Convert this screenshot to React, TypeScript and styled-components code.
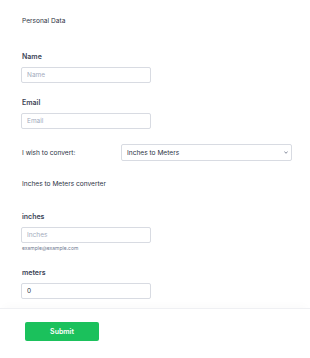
import React from "react";
import styled, { createGlobalStyle } from "styled-components";

const GlobalStyle = createGlobalStyle`
  html, body {
    margin: 0;
    padding: 0;
    background: #ffffff;
  }
  body {
    font-family: Inter, "Noto Sans", sans-serif;
    color: #2c3345;
  }
`;

const Page = styled.div`
  width: 310px;
  height: 358px;
  overflow: hidden;
  display: flex;
  flex-direction: column;
`;

const Body = styled.div`
  padding: 16px 0 0 21px;
  display: flex;
  flex-direction: column;
`;

const Heading = styled.div`
  font-size: 6.6px;
  line-height: 10px;
  padding-left: 1px;
  margin-bottom: 26px;
`;

const Field = styled.div<{ $gap?: number }>`
  display: flex;
  flex-direction: column;
  margin-bottom: ${(p) => p.$gap ?? 15}px;
`;

const Label = styled.label`
  font-size: 7px;
  font-weight: 600;
  line-height: 10px;
  color: #3b4356;
  padding-left: 1px;
  margin-bottom: 5px;
`;

const Input = styled.input`
  display: block;
  box-sizing: border-box;
  width: 130px;
  height: 16px;
  margin: 0;
  border: 1px solid #d8dbe2;
  border-radius: 2px;
  padding: 0 5px;
  font-family: inherit;
  font-size: 6.5px;
  color: #2c3345;
  outline: none;
  &::placeholder {
    color: #a3abbd;
  }
`;

const Sublabel = styled.div`
  font-size: 5px;
  line-height: 6px;
  color: #6f7a90;
  margin-top: 2px;
  padding-left: 1px;
`;

const ConvertRow = styled.div`
  display: flex;
  align-items: center;
  margin-bottom: 18px;
`;

const RowLabel = styled.label`
  width: 99px;
  font-size: 6.6px;
  line-height: 10px;
  padding-left: 1px;
`;

const SelectWrap = styled.div`
  position: relative;
  width: 171px;
  height: 17px;
  line-height: 0;
`;

const Select = styled.select`
  display: block;
  box-sizing: border-box;
  width: 100%;
  height: 100%;
  margin: 0;
  appearance: none;
  border: 1px solid #d8dbe2;
  border-radius: 2px;
  background: #ffffff;
  padding: 0 5px;
  font-family: inherit;
  font-size: 6.6px;
  color: #2c3345;
  outline: none;
`;

const Chevron = styled.svg`
  position: absolute;
  right: 4px;
  top: 7px;
  width: 4px;
  height: 3px;
  pointer-events: none;
`;

const Note = styled.div`
  font-size: 6.6px;
  line-height: 10px;
  padding-left: 1px;
  margin-bottom: 23px;
`;

const Footer = styled.div`
  margin-top: 9px;
  border-top: 1px solid #eff0f3;
  box-shadow: 0 -6px 8px -4px rgba(0, 0, 0, 0.025);
  padding: 13px 0 0 25px;
`;

const SubmitButton = styled.button`
  display: block;
  width: 74px;
  height: 19px;
  border: none;
  border-radius: 2px;
  background: #1bc15c;
  color: #ffffff;
  font-family: inherit;
  font-size: 7px;
  font-weight: 600;
  cursor: pointer;
`;

export default function App() {
  return (
    <Page>
      <GlobalStyle />
      <Body>
        <Heading>Personal Data</Heading>
        <Field>
          <Label>Name</Label>
          <Input placeholder="Name" />
        </Field>
        <Field>
          <Label>Email</Label>
          <Input placeholder="Email" />
        </Field>
        <ConvertRow>
          <RowLabel>I wish to convert:</RowLabel>
          <SelectWrap>
            <Select defaultValue="im">
              <option value="im">Inches to Meters</option>
              <option value="mi">Meters to Inches</option>
            </Select>
            <Chevron viewBox="0 0 4 3">
              <path d="M0.4 0.5 L2 2.3 L3.6 0.5" fill="none" stroke="#6b7488" strokeWidth="0.8" />
            </Chevron>
          </SelectWrap>
        </ConvertRow>
        <Note>Inches to Meters converter</Note>
        <Field $gap={17}>
          <Label>inches</Label>
          <Input placeholder="Inches" />
          <Sublabel>example@example.com</Sublabel>
        </Field>
        <Field $gap={0}>
          <Label>meters</Label>
          <Input defaultValue="0" />
        </Field>
      </Body>
      <Footer>
        <SubmitButton>Submit</SubmitButton>
      </Footer>
    </Page>
  );
}
